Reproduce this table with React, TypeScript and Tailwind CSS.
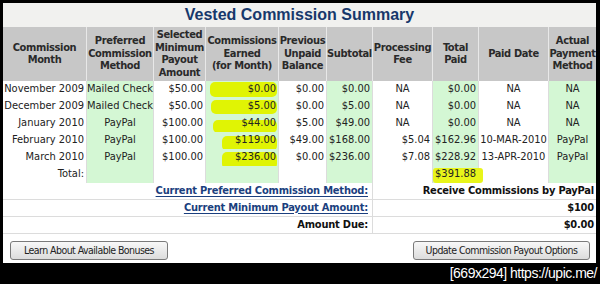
import React from "react";

const GRID =
  "grid grid-cols-[84px_67px_52px_73px_48px_46px_60px_46px_70px_47px]";

const headers = [
  ["Commission", "Month"],
  ["Preferred", "Commission", "Method"],
  ["Selected", "Minimum", "Payout", "Amount"],
  ["Commissions", "Earned", "(for Month)"],
  ["Previous", "Unpaid", "Balance"],
  ["Subtotal"],
  ["Processing", "Fee"],
  ["Total", "Paid"],
  ["Paid Date"],
  ["Actual", "Payment", "Method"],
];

const rows = [
  ["November 2009", "Mailed Check", "$50.00", "$0.00", "$0.00", "$0.00", "NA", "$0.00", "NA", "NA"],
  ["December 2009", "Mailed Check", "$50.00", "$5.00", "$0.00", "$5.00", "NA", "$0.00", "NA", "NA"],
  ["January 2010", "PayPal", "$100.00", "$44.00", "$5.00", "$49.00", "NA", "$0.00", "NA", "NA"],
  ["February 2010", "PayPal", "$100.00", "$119.00", "$49.00", "$168.00", "$5.04", "$162.96", "10-MAR-2010", "PayPal"],
  ["March 2010", "PayPal", "$100.00", "$236.00", "$0.00", "$236.00", "$7.08", "$228.92", "13-APR-2010", "PayPal"],
  ["Total:", "", "", "", "", "", "", "$391.88", "", ""],
];

// highlight marks in "Commissions Earned" column
const marks: Record<number, string> = {
  0: "left-[4px] right-[1px] top-[1px] h-[15px]",
  1: "left-[5px] right-[1px] top-[2px] h-[14px]",
  2: "left-[7px] right-[1px] top-[5px] h-[13px]",
  3: "left-[16px] right-[1px] top-[4px] h-[15px]",
  4: "left-[16px] right-[1px] top-[3px] h-[17px]",
};

const green = "bg-[#d4f7d4]";

function align(ci: number, v: string) {
  if (ci === 1 || ci === 8 || ci === 9) return "justify-center";
  if (ci === 6 && v === "NA") return "justify-center";
  return "justify-end";
}

export default function App() {
  const body = "font-['DejaVu_Sans_Condensed','DejaVu_Sans',sans-serif]";
  return (
    <div className="w-[600px] h-[284px] bg-black overflow-hidden flex flex-col">
      <div className={`ml-[3px] mt-[3px] w-[593px] h-[260px] bg-white flex flex-col ${body} text-[11px] text-[#222]`}>
        <div className="h-[24px] bg-[#f1f1ef] flex items-center justify-center font-['Liberation_Sans',sans-serif] font-bold text-[16px] text-[#17386b]">
          Vested Commission Summary
        </div>
        <div className={`${GRID} h-[54px]`}>
          {headers.map((h, i) => (
            <div
              key={i}
              className={`bg-[#c7c7c7] ${i < 9 ? "border-r border-[#e8e8e8]" : ""} flex flex-col items-center justify-center text-center font-bold text-[11px] tracking-[-0.35px] leading-[12.5px] text-[#2a2a2a]`}
            >
              {h.map((l) => (
                <span key={l} className="whitespace-nowrap">{l}</span>
              ))}
            </div>
          ))}
        </div>
        {rows.map((r, ri) => (
          <div key={ri} className={`${GRID} h-[17px] border-b border-[#dcdcdc]`}>
            {r.map((v, ci) => (
              <div
                key={ci}
                className={`relative flex items-center ${align(ci, v)} px-[2px] whitespace-nowrap ${ci % 2 === 1 ? green : "bg-white"} ${ci < 9 ? "border-r border-[#dcdcdc]" : ""}`}
              >
                {ci === 3 && marks[ri] !== undefined && (
                  <span className={`absolute ${marks[ri]} rounded-[5px] bg-[#e0f404]`} />
                )}
                {ci === 7 && ri === 5 && (
                  <span className="absolute left-0 right-[-5px] top-[2px] h-[15px] rounded-[3px] bg-[#e8f51a] z-10" />
                )}
                <span className="relative z-20">{v}</span>
              </div>
            ))}
          </div>
        ))}
        {[
          ["Current Preferred Commission Method:", "Receive Commissions by PayPal", true],
          ["Current Minimum Payout Amount:", "$100", true],
          ["Amount Due:", "$0.00", false],
        ].map(([l, v, link], i) => (
          <div key={i} className="flex h-[17px] border-b border-[#dcdcdc] font-bold tracking-[-0.2px]">
            <div className="w-[370px] border-r border-[#dcdcdc] flex items-center justify-end pr-[4px]">
              <span className={link ? "text-[#1b3f7e] underline underline-offset-[2px]" : "text-[#111]"}>
                {l as string}
              </span>
            </div>
            <div className="flex-1 flex items-center justify-end pr-[2px] text-[#111]">{v as string}</div>
          </div>
        ))}
        <div className="flex justify-between pl-[7px] pr-[6px] pt-[7px]">
          <button className="w-[158px] h-[19px] rounded-[3px] border border-[#7a7a7a] bg-gradient-to-b from-[#f8f8f8] to-[#dcdcdc] text-[10.5px] tracking-[-0.55px] whitespace-nowrap text-[#222] flex items-center justify-center">
            Learn About Available Bonuses
          </button>
          <button className="w-[177px] h-[19px] rounded-[3px] border border-[#7a7a7a] bg-gradient-to-b from-[#f8f8f8] to-[#dcdcdc] text-[10.5px] tracking-[-0.55px] whitespace-nowrap text-[#222] flex items-center justify-center">
            Update Commission Payout Options
          </button>
        </div>
      </div>
      <div className="flex-1 flex items-center justify-end pr-[3px] text-white font-['Liberation_Sans',sans-serif] text-[14px] tracking-[-0.5px]">
        [669x294] https://upic.me/
      </div>
    </div>
  );
}
